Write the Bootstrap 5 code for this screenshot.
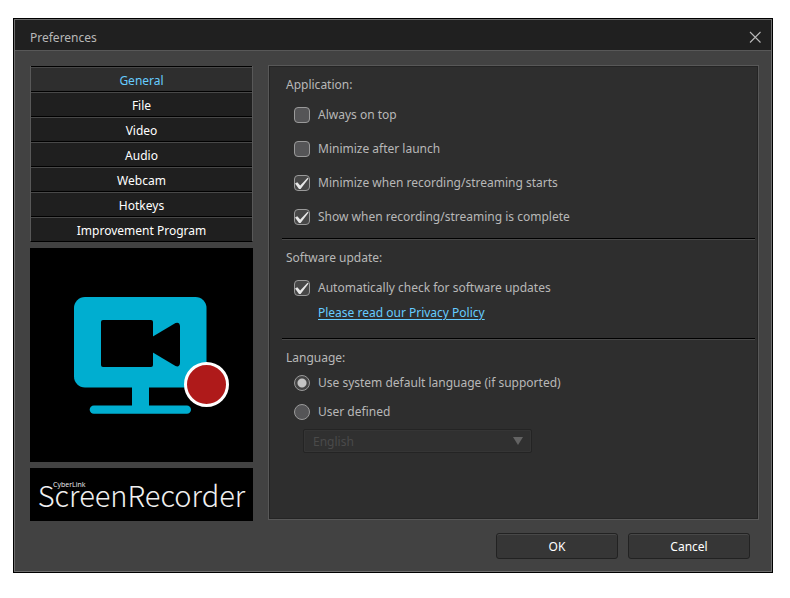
<!DOCTYPE html>
<html lang="en">
<head>
<meta charset="utf-8">
<meta name="viewport" content="width=device-width, initial-scale=1">
<title>Preferences</title>
<link href="https://cdn.jsdelivr.net/npm/bootstrap@5.3.0/dist/css/bootstrap.min.css" rel="stylesheet">
<style>
  body { background: #fff; color: #b8b8b8; font-family: "Noto Sans", "Open Sans", sans-serif; font-size: 12px; line-height: 20px; }
  .page { padding: 18px 17px 25px 13px; }
  .dialog-window { background: #424242; border: 1px solid #000; box-shadow: inset 0 0 0 1px #6e6e6e; padding: 1px; }
  .title-bar { background: #202020; border-bottom: 1px solid #585858; height: 31px; padding: 0 8px 0 15px; }
  .title-bar h1 { font-size: 12px; line-height: 20px; padding-top: 5px; }
  .close-btn { width: 16px; height: 16px; line-height: 0; margin-top: 3px; }
  .dialog-body { padding: 14px 12px 12px 15px; gap: 12px; }
  .side-col { width: 223px; padding-top: 1px; margin-right: 15px; gap: 6px; }
  .side-nav { background: #202020; border: 1px solid #585858; border-width: 0 1px 1px; border-bottom-color: #000; }
  .side-nav button { height: 25px; border: 0; border-top: 1px solid #000; box-shadow: inset 0 1px 0 #484848; background: #1f1f1f; color: #fff; padding: 4px 0 0; text-align: center; }
  .side-nav button.active { background: #2e2e2e; color: #66ccff; }
  .picture-box { background: #000; height: 214px; }
  .brand-box { background: #000; color: #f0f0f0; height: 53px; font-family: "Noto Sans CJK SC", "Open Sans", sans-serif; font-weight: 300; }
  .brand-name { font-size: 29px; line-height: 53px; }
  .brand-maker { position: absolute; left: 23px; top: 11px; font-family: "Open Sans", sans-serif; font-size: 7px; line-height: 12px; font-weight: 400; }
  .settings { background: #2e2e2e; border: 1px solid #585858; box-shadow: inset 0 0 0 1px #242424; padding: 0 3px 57px 13px; }
  .settings fieldset { padding: 8px 4px 9px; border-top: 1px solid #000; box-shadow: inset 0 1px 0 #484848; }
  .settings fieldset:first-child { border: 0; box-shadow: none; }
  .settings fieldset.update-group { padding-bottom: 14px; }
  .settings legend { font-size: 12px; line-height: 22px; margin-bottom: 7px; }
  .settings .language-group legend { margin-bottom: 2px; }
  .option-list { gap: 10px; }
  .language-group .option-list { gap: 5px; }
  .option { padding: 0 0 0 8px; gap: 8px; height: 24px; margin: 0; min-height: 0; }
  .option .form-check-input { width: 16px; height: 16px; margin: 0; float: none; flex: none; background-color: #555557; border: 1px solid #9a9a9a; box-shadow: none; }
  .option .form-check-input[type=checkbox] { border-radius: 4px; background-size: 16px 16px; background-position: center; }
  .option .form-check-input[type=checkbox]:checked { background-color: #474747; background-image: url("data:image/svg+xml,%3Csvg xmlns='http://www.w3.org/2000/svg' viewBox='0 0 16 16'%3E%3Cpath d='M1 8.5l2.3-1.3 2.9 3.2L13.6 2.8l1 .6L6.6 14H5z' fill='%23e6e6e6'/%3E%3C/svg%3E"); }
  .option .form-check-input[type=radio]:checked { background-color: #444; background-image: radial-gradient(circle, #c4c4c4 4px, transparent 5px); }
  .option label { line-height: 20px; }
  .policy { margin: 3px 0 1px 32px; }
  .policy a { color: #66ccff; text-decoration: underline; text-underline-offset: 2px; }
  .language-list { width: 229px; margin: 5px 0 0 17px; }
  .language-list .form-select { height: 24px; padding: 2px 9px 0; font-size: 12px; line-height: 20px; color: #4a4a4a; background-color: #303030; background-image: url("data:image/svg+xml,%3Csvg xmlns='http://www.w3.org/2000/svg' viewBox='0 0 10 8'%3E%3Cpath d='M0 0h10L5 8z' fill='%23636363'/%3E%3C/svg%3E"); background-size: 10px 8px; background-position: right 8px center; border: 1px solid #242424; border-radius: 2px; box-shadow: inset 0 0 0 1px #353535; opacity: 1; }
  .actions { padding: 0 9px 0 0; gap: 10px; }
  .actions .btn { width: 122px; height: 26px; padding: 0; font-size: 12px; line-height: 25px; color: #fff; background: #363636; border: 1px solid #222; border-radius: 3px; box-shadow: inset 0 1px 0 #484848; }
</style>
</head>
<body>
<main class="page">
  <div class="dialog-window" role="dialog" aria-labelledby="dialog-title">
    <header class="title-bar d-flex align-items-center justify-content-between">
      <h1 id="dialog-title" class="fw-normal mb-0">Preferences</h1>
      <button type="button" class="close-btn btn p-0 border-0" aria-label="Close">
        <svg width="16" height="16" viewBox="0 0 16 16" fill="none" stroke="#b8b8b8" stroke-width="1.1"><path d="M3 3l10.500 10.500M13.500 3L3 13.500"/></svg>
      </button>
    </header>
    <div class="dialog-body d-flex flex-column">
      <div class="d-flex align-items-start">
        <div class="side-col d-flex flex-column flex-shrink-0">
          <nav class="side-nav d-flex flex-column" aria-label="Categories">
            <button type="button" class="active" aria-current="page">General</button>
            <button type="button">File</button>
            <button type="button">Video</button>
            <button type="button">Audio</button>
            <button type="button">Webcam</button>
            <button type="button">Hotkeys</button>
            <button type="button">Improvement Program</button>
          </nav>
          <div class="picture-box">
            <svg class="d-block" width="223" height="214" viewBox="0 0 223 214" role="img" aria-label="Screen recording">
              <rect x="44" y="49" width="132.500" height="90.500" rx="11" fill="#00aed0"/>
              <rect x="102" y="138" width="17" height="20" fill="#00aed0"/>
              <rect x="59.700" y="157.500" width="101.300" height="8.300" rx="4.150" fill="#00aed0"/>
              <rect x="71" y="72" width="52" height="47" rx="2" fill="#000"/>
              <path d="M117 92l28.500-17q4-1.500 4.500 3v37q-.5 4.500-4.500 3L117 101z" fill="#000"/>
              <circle cx="176.500" cy="136.500" r="21" fill="#af1a1a" stroke="#fff" stroke-width="3"/>
            </svg>
          </div>
          <div class="brand-box position-relative text-center">
            <span class="brand-maker">CyberLink</span>
            <div class="brand-name">ScreenRecorder</div>
          </div>
        </div>
        <form class="settings flex-grow-1" id="settings">
          <fieldset>
            <legend>Application:</legend>
            <div class="option-list d-flex flex-column">
              <div class="option form-check d-flex align-items-center"><input class="form-check-input" type="checkbox" id="top"><label for="top">Always on top</label></div>
              <div class="option form-check d-flex align-items-center"><input class="form-check-input" type="checkbox" id="launch"><label for="launch">Minimize after launch</label></div>
              <div class="option form-check d-flex align-items-center"><input class="form-check-input" type="checkbox" id="starts" checked><label for="starts">Minimize when recording/streaming starts</label></div>
              <div class="option form-check d-flex align-items-center"><input class="form-check-input" type="checkbox" id="complete" checked><label for="complete">Show when recording/streaming is complete</label></div>
            </div>
          </fieldset>
          <fieldset class="update-group">
            <legend>Software update:</legend>
            <div class="option form-check d-flex align-items-center"><input class="form-check-input" type="checkbox" id="updates" checked><label for="updates">Automatically check for software updates</label></div>
            <div class="policy"><a href="#privacy">Please read our Privacy Policy</a></div>
          </fieldset>
          <fieldset class="language-group">
            <legend>Language:</legend>
            <div class="option-list d-flex flex-column">
              <div class="option form-check d-flex align-items-center"><input class="form-check-input" type="radio" name="lang" id="system" checked><label for="system">Use system default language (if supported)</label></div>
              <div class="option form-check d-flex align-items-center"><input class="form-check-input" type="radio" name="lang" id="user"><label for="user">User defined</label></div>
            </div>
            <div class="language-list"><select class="form-select" aria-label="Language" disabled><option>English</option></select></div>
          </fieldset>
        </form>
      </div>
      <div class="actions d-flex justify-content-end">
        <button type="submit" form="settings" class="btn">OK</button>
        <button type="button" class="btn">Cancel</button>
      </div>
    </div>
  </div>
</main>
<script src="https://cdn.jsdelivr.net/npm/bootstrap@5.3.0/dist/js/bootstrap.bundle.min.js"></script>
</body>
</html>
